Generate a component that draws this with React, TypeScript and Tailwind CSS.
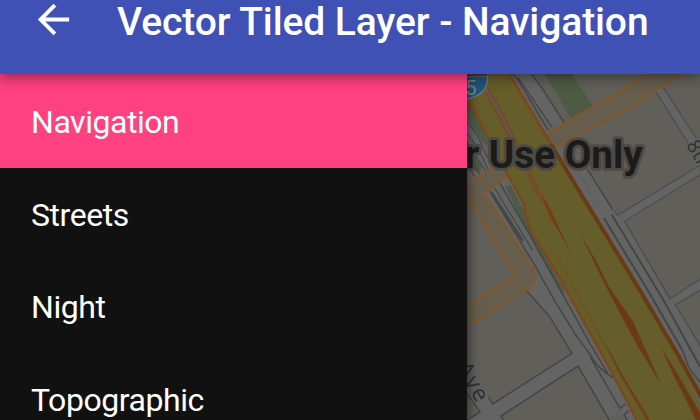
const styles = ["Navigation", "Streets", "Night", "Topographic"];

function StreetMap() {
  return (
    <svg className="block h-full w-full" viewBox="3 0 699 1038" fill="none" preserveAspectRatio="none">
      <rect width="702" height="1038" fill="#615f5a" />
      {/* parks */}
      <path d="M237 0H316L381 96L316 136Z" fill="#4d5a44" />
      <path d="M3 80L18 100L72 205L60 215L3 140Z" fill="#4d5a44" />
      {/* local streets */}
      <g fill="#646464">
        <path d="M142 0H200L290 148L240 180L130 0Z" />
        <path d="M3 130L35 180L80 270L125 305L200 460L300 660L440 905L520 1038H475L462 1003L430 1038L336 876L105 1026L110 1038H3V1032L42 1014L25 975L60 955L80 990L318 838L250 727L183 652L215 610L55 355L100 290L3 330Z" />
        <path d="M265 225L320 220L437 405L455 424L702 272V300L476 442L608 674L702 616V648L628 692L702 813V940L640 850Z" />
        <path d="M568 50L590 38L702 212L688 240Z" />
      </g>
      <path d="M18 238L48 280L36 300L3 250Z" fill="#4d5a44" />
      <path d="M118 339L134 333L184 432L192 466L296 650L288 663L196 495Z" fill="#4d5a44" />
      <g stroke="#434745" strokeWidth="4.5" strokeLinejoin="round">
        <path d="M142 0L160 24L246 168M156 10L258 160M196 0L228 42L296 148" />
        <path d="M3 142L34 184L60 242L82 278M3 178L36 222L66 286M3 204L24 238L60 292M3 240L42 300M3 268L26 309" strokeWidth="3.5" />
        <path d="M70 350L210 580L262 674M102 328L190 480L284 650L370 805L425 898" />
        <path d="M86 342L200 530" strokeWidth="3.5" />
        <path d="M75 354L170 500" strokeWidth="8" />
        <path d="M183 652L250 727L318 838L80 990L67 968M262 674L330 784L373 842Q390 880 442 912M373 850L462 1003L478 990M484 1038L474 1022L488 1010" />
        <path d="M430 1038L336 876L105 1026L112 1038M3 958L42 1014L3 1038" />
        <path d="M363 284L438 404" strokeWidth="5" />
        <path d="M414 433L540 640L650 830M437 422L590 674L702 878" strokeWidth="6" />
        <path d="M650 830L668 880L702 926" />
      </g>
      <g stroke="#4b4c4e" strokeWidth="3.5">
        <path d="M437 404L456 424L702 273M702 616L612 674L476 442L702 302" />
        <path d="M702 648L628 692L702 815" />
        <path d="M568 50L682 232M590 38L694 198" />
      </g>
      <path d="M314 252L400 400" stroke="#57585a" strokeWidth="2" />
      {/* connector streets */}
      <path d="M236 182L370 104L482 38L532 0H646L490 104L262 222Z" fill="#675d4d" />
      <path d="M3 330L80 282L128 305L55 355L206 592Q218 622 190 645L148 668L50 735L3 754V694L147 605L15 388L3 394Z" fill="#675d4d" />
      <g stroke="#885720" strokeWidth="5">
        <path d="M236 182L370 104L482 38L532 2M646 2L490 104L262 222" />
        <path d="M3 330L80 282M128 305L55 357L206 592Q218 622 190 643L152 661M145 668L50 732L3 754M3 394L15 388L148 605L3 694" />
      </g>
      {/* freeway */}
      <path d="M3 75L10 80L125 303L174 390L176 408L192 466L280 610L440 900L512 1038H720L640 850L520 646L264 225L130 0H3Z" fill="#655e2a" />
      <path d="M10 80L125 303L174 390L176 408L192 466L280 610L440 900L512 1038" stroke="#80451a" strokeWidth="6.5" />
      <path d="M130 0L264 225" stroke="#80451a" strokeWidth="8" />
      <path d="M254 210L350 368L520 646L640 850L705 968" stroke="#6b3a14" strokeWidth="12" />
      <path d="M54 50L90 112L160 246L204 348L256 424L216 350L180 266L120 138L68 42" fill="#5e584e" />
      <path d="M56 52L90 112L160 246L208 350L258 424M68 42L120 138L180 266L216 350L260 420" stroke="#80451b" strokeWidth="4.5" />
      <path d="M228 360L256 412L320 546L250 425Z" fill="#733d15" />
      <path d="M344 482L388 556L430 640L500 740L585 930L520 826L490 770L418 635Z" fill="#6b3a14" />
      <path d="M265 535L340 670L420 820L545 1038" stroke="#734519" strokeWidth="2.5" />
      <path d="M415 800L464 893L552 1038H542L456 893Z" fill="#733d15" />
      <path d="M584 818L635 900L704 1020V1038H690L622 902Z" fill="#6b3a14" />
      {/* interstate shield */}
      <path d="M3 6H64Q67 64 3 74Z" fill="#1f5878" />
      <path d="M64 5Q68 64 3 74" stroke="#74797b" strokeWidth="3.5" />
      <path d="M3 8H64" stroke="#74797b" strokeWidth="2" />
      <path d="M3 0H62V6H3Z" fill="#692e2a" />
      <text x="-2" y="62" fontSize="60" fill="#80878a" fontFamily="Roboto, sans-serif">5</text>
      {/* street labels */}
      <g fontFamily="'Noto Sans', sans-serif" fill="#333333" stroke="#626262" strokeWidth="10" strokeLinejoin="round" paintOrder="stroke">
        <text transform="translate(-30 880) rotate(60)" fontSize="68" letterSpacing="4">Ave</text>
        <text transform="translate(659 212) rotate(60)" fontSize="60">8th</text>
      </g>
      <text x="530" y="282" textAnchor="end" fontSize="116" fontWeight="700" fontFamily="Roboto, sans-serif" fill="#1c1b19" stroke="#4c4a45" strokeWidth="17" strokeLinejoin="round" paintOrder="stroke">For Use Only</text>
    </svg>
  );
}

export default function App() {
  return (
    <div className="flex h-[420px] w-[700px] flex-col overflow-hidden bg-[#111111] font-['Roboto',sans-serif] text-white">
      <header className="relative z-20 flex h-[74px] shrink-0 items-start bg-[#3f51b5] shadow-[0_4px_12px_rgba(0,0,0,0.4)]">
        <svg className="ml-[30px] mt-[-4px] h-[47px] w-[47px] shrink-0" viewBox="0 0 24 24" fill="white" aria-label="Back">
          <path d="M20 11H7.83l5.59-5.59L12 4l-8 8 8 8 1.41-1.41L7.83 13H20v-2z" />
        </svg>
        <h1 className="ml-[40px] whitespace-nowrap text-[39px] font-medium leading-[44px] tracking-[-0.1px]">Vector Tiled Layer - Navigation</h1>
      </header>
      <main className="flex min-h-0 flex-1">
        <nav className="z-10 w-[467px] shrink-0 overflow-hidden bg-[#111111] shadow-[2px_0_10px_rgba(0,0,0,0.5)]">
          {styles.map((name, index) => (
            <div key={name} className={index === 0 ? "flex h-[94px] items-center bg-[#ff4081] pl-[31px] pt-[2px] text-[32px] tracking-[-0.45px]" : "flex h-[92.5px] items-center pl-[31px] pt-px text-[32px] tracking-[-0.45px]"}>
              {name}
            </div>
          ))}
        </nav>
        <section className="min-w-0 flex-1">
          <StreetMap />
        </section>
      </main>
    </div>
  );
}
